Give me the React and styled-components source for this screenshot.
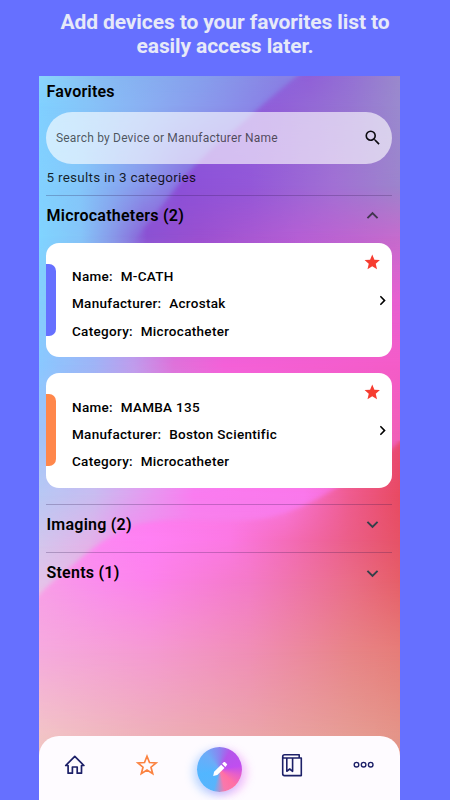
import React from "react";
import styled, { createGlobalStyle } from "styled-components";

const GlobalStyle = createGlobalStyle`
  *, *::before, *::after { box-sizing: border-box; }
  body { margin: 0; background: #6670ff; }
  h1, h2, p, ul, dl, dd { margin: 0; padding: 0; }
`;

const Page = styled.div`
  width: 450px;
  height: 800px;
  overflow: hidden;
  background: #6670ff;
  font-family: Roboto, "Liberation Sans", sans-serif;
  color: #000;
`;

const Headline = styled.h1`
  height: 76px;
  padding: 10px 0 0;
  text-align: center;
  font-size: 21px;
  line-height: 24.4px;
  font-weight: 700;
  letter-spacing: -0.1px;
  color: #e6e9f8;
`;

const Phone = styled.main`
  position: relative;
  isolation: isolate;
  display: flex;
  flex-direction: column;
  width: 361.5px;
  height: 724px;
  margin-left: 38.5px;
  overflow: hidden;
`;

const WallpaperSvg = styled.svg`
  position: absolute;
  inset: 0;
  z-index: -1;
  width: 100%;
  height: 100%;
`;

const Content = styled.div`
  flex: 1;
  padding: 0 8px 0 7.5px;
`;

const ScreenTitle = styled.h2`
  height: 36px;
  padding: 6px 0 0 0.5px;
  font-size: 16px;
  line-height: 20px;
  font-weight: 600;
  letter-spacing: 0.25px;
`;

const SearchBar = styled.div`
  display: flex;
  align-items: center;
  justify-content: space-between;
  height: 51.5px;
  padding: 0 10px;
  border-radius: 26px;
  background: rgba(255, 255, 255, 0.62);
`;

const Placeholder = styled.span`
  font-size: 12px;
  letter-spacing: 0.19px;
  color: rgba(0, 0, 0, 0.65);
`;

const ResultCount = styled.p`
  height: 31.5px;
  padding: 4px 0 0 0.5px;
  font-size: 13.5px;
  line-height: 19px;
  letter-spacing: 0.26px;
  color: rgba(0, 0, 0, 0.85);
`;

const Section = styled.section`
  border-top: 1px solid rgba(40, 20, 70, 0.25);
`;

const SectionHeader = styled.div`
  display: flex;
  align-items: center;
  justify-content: space-between;
  height: ${(p) => (p.$open ? "47px" : "47.3px")};
  padding: 0 8px ${(p) => (p.$open ? "8px" : "7px")} 0.5px;
`;

const SectionTitle = styled.h2`
  font-size: 16px;
  line-height: 20px;
  font-weight: 600;
  letter-spacing: 0.24px;
`;

const CardList = styled.div`
  display: flex;
  flex-direction: column;
  gap: 16px;
  padding-bottom: 16px;
`;

const Card = styled.article`
  display: flex;
  height: 114.3px;
  border-radius: 13px;
  background: #fff;
  overflow: hidden;
`;

const ColorTab = styled.div`
  align-self: center;
  width: 10px;
  height: 72px;
  border-radius: 0 7px 7px 0;
  background: ${(p) => p.$color};
`;

const Details = styled.dl`
  flex: 1;
  padding: 19.7px 0 0 16px;
`;

const Detail = styled.div`
  display: flex;
  gap: 7.7px;
  height: 27.2px;
  align-items: center;
  font-size: 13.5px;
  font-weight: 500;
  letter-spacing: 0.31px;

  dd { white-space: nowrap; }
`;

const CardActions = styled.div`
  display: flex;
  flex-direction: column;
  align-items: flex-end;
  width: 30px;
  padding: 10px 0 0;
`;

const StarSlot = styled.div`
  height: 37.5px;
  padding-right: 10.5px;
`;

const NavBar = styled.nav`
  display: grid;
  grid-template-columns: repeat(5, 1fr);
  height: 64px;
  border-radius: 20px 20px 0 0;
  background: #fefbff;
`;

const NavItem = styled.div`
  display: flex;
  justify-content: center;
  padding-top: ${(p) => p.$top || 17}px;
`;

const EditButton = styled.div`
  display: flex;
  align-items: center;
  justify-content: center;
  width: 45px;
  height: 45px;
  padding-bottom: 2px;
  padding-left: 1px;
  border-radius: 50%;
  background: conic-gradient(
    from 0deg,
    #8a84f0 0deg,
    #b455ea 30deg,
    #c04ef0 80deg,
    #e860c8 108deg,
    #ff70a4 135deg,
    #f878ac 165deg,
    #58b4fc 197deg,
    #52b6ff 255deg,
    #6cacf8 320deg,
    #8a84f0 360deg
  );
  box-shadow: -4px 3px 9px rgba(90, 170, 255, 0.38), 5px 3px 9px rgba(235, 100, 240, 0.36);
`;

const Icon = styled.svg`
  display: block;
  flex: none;
`;

const WIDTH = 361.5;

/* Each row: [y, [x, colour] ...]; neighbouring rows blend into one another. */
const SKY = [
  [0, [0, "#8ad6fb"], [60, "#87bcf4"], [160, "#86a0ed"], [240, "#8983e4"], [361, "#8983e4"]],
  [30, [0, "#80d0ff"], [50, "#86c3f8"], [110, "#8aaef2"], [190, "#8a90ea"], [240, "#8a7ce4"], [361, "#8a70e0"]],
  [110, [0, "#82d1ff"], [40, "#84c7fa"], [70, "#86b0f3"], [110, "#8a92ea"], [145, "#8a70e0"], [180, "#8a60dc"]],
  [160, [0, "#80d4ff"], [42, "#85c4f8"], [75, "#8897e8"], [105, "#8a64d8"], [160, "#9a50d0"], [260, "#b45fd4"], [361, "#c46ccc"]],
  [225, [0, "#84cffd"], [70, "#98a8f0"], [140, "#c060d8"], [361, "#e860d0"]],
  [289, [0, "#8ac8ff"], [55, "#9fb4f6"], [95, "#c09cec"], [135, "#df72da"], [185, "#f460d8"], [361, "#f45cc8"]],
  [354, [0, "#9fc4fa"], [100, "#c4a8f0"], [200, "#f878e4"], [361, "#f060b8"]],
  [419, [0, "#b8c8f4"], [55, "#c9bcf0"], [105, "#e49cf0"], [155, "#fa7cf0"], [265, "#fa78ec"], [361, "#f060a8"]],
  [470, [0, "#d3c6ec"], [50, "#e4b2e8"], [90, "#f68cf0"], [361, "#f878dc"]],
  [520, [0, "#eac2e8"], [361, "#f0a0e8"]],
];

const VIOLET = [
  [0, [240, "#8b64dc"], [270, "#9060d8"], [315, "#9472d4"], [361, "#9a89cc"]],
  [30, [190, "#8c5cdc"], [240, "#9160d8"], [310, "#9674d2"], [361, "#9a8ace"]],
  [110, [110, "#8a60dc"], [140, "#8b50d8"], [210, "#9357d8"], [295, "#a170d4"], [361, "#9c84cc"]],
  [160, [85, "#8886e4"], [108, "#8b50d2"], [160, "#9a50d0"], [260, "#b45fd4"], [361, "#c46ccc"]],
  [225, [0, "#84cffd"], [140, "#c060d8"], [361, "#e860d0"]],
];

const CORAL = [
  [365, [0, "#fb7cf0"], [290, "#f05c9c"], [361, "#e84a72"]],
  [419, [0, "#fb7cf0"], [245, "#fa78e4"], [310, "#ef5c90"], [361, "#e84a62"]],
  [464, [0, "#fa94ee"], [60, "#fc88f2"], [110, "#ff80f4"], [190, "#fc78e4"], [250, "#f46cb8"], [310, "#eb5e88"], [361, "#e65266"]],
  [504, [0, "#f89ee8"], [60, "#fb8cee"], [110, "#fd82ec"], [210, "#f47ac8"], [310, "#ea6c88"], [361, "#e65e68"]],
  [574, [0, "#f6aade"], [110, "#f59ad2"], [210, "#f08eb6"], [310, "#e88488"], [361, "#e67c78"]],
  [660, [0, "#f2c4c6"], [110, "#eeb0b9"], [210, "#eba5aa"], [310, "#e69c94"], [361, "#e49488"]],
  [724, [0, "#f0c8c0"], [361, "#e09888"]],
];

function BlendedRows({ id, rows }) {
  return rows.map(([y, ...stops], i) => {
    const from = i === 0 ? y - 1 : rows[i - 1][0];
    return (
      <g key={y}>
        <defs>
          <linearGradient id={`${id}-c${i}`} gradientUnits="userSpaceOnUse" x1="0" x2={WIDTH} y1="0" y2="0">
            {stops.map(([x, color]) => (
              <stop key={x} offset={x / WIDTH} stopColor={color} />
            ))}
          </linearGradient>
          <linearGradient id={`${id}-f${i}`} gradientUnits="userSpaceOnUse" x1="0" x2="0" y1={from} y2={y}>
            <stop offset="0" stopColor="#fff" stopOpacity="0" />
            <stop offset="1" stopColor="#fff" />
          </linearGradient>
          <mask id={`${id}-m${i}`} maskUnits="userSpaceOnUse" x="0" y="-2" width={WIDTH} height="730">
            <rect y={from} width={WIDTH} height={730 - from} fill={`url(#${id}-f${i})`} />
          </mask>
        </defs>
        <rect y={from} width={WIDTH} height={730 - from} fill={`url(#${id}-c${i})`} mask={`url(#${id}-m${i})`} />
      </g>
    );
  });
}

function Wallpaper() {
  return (
    <WallpaperSvg viewBox="0 0 361.5 724" preserveAspectRatio="none" aria-hidden="true">
      <defs>
        <filter id="soft" x="-10%" y="-10%" width="120%" height="120%">
          <feGaussianBlur stdDeviation="2" />
        </filter>
        <linearGradient id="violet-fade" x1="0" y1="0" x2="0" y2="1">
          <stop offset="0.6" stopColor="#fff" />
          <stop offset="1" stopColor="#fff" stopOpacity="0" />
        </linearGradient>
        <mask id="violet-shape" maskUnits="userSpaceOnUse" x="0" y="0" width="362" height="724">
          <path
            d="M266 -6 L258 0 C244 11 231 22 218 34 C204 47 190 58 176 70 C166 79 158 87 150 96 C138 110 126 126 115 140 C108 149 100 158 92 168 L60 260 H380 V-6 Z"
            fill="url(#violet-fade)"
            filter="url(#soft)"
          />
        </mask>
        <mask id="coral-shape" maskUnits="userSpaceOnUse" x="0" y="0" width="362" height="724">
          <path
            d="M-10 528 L0 519 C10 508 20 500 30 492 C41 483 52 473 63 466 C75 459 86 452 100 448 C145 438 190 450 232 441 C266 432 285 419 309 405 C330 393 346 380 375 352 V740 H-10 Z"
            fill="#fff"
            filter="url(#soft)"
          />
        </mask>
      </defs>
      <BlendedRows id="sky" rows={SKY} />
      <g mask="url(#violet-shape)">
        <BlendedRows id="violet" rows={VIOLET} />
      </g>
      <g mask="url(#coral-shape)">
        <BlendedRows id="coral" rows={CORAL} />
      </g>
    </WallpaperSvg>
  );
}

const SearchIcon = () => (
  <Icon width="19.5" height="19.5" viewBox="0 0 24 24" fill="#0c0a10">
    <path d="M15.5 14h-.79l-.28-.27A6.47 6.47 0 0 0 16 9.5 6.5 6.5 0 1 0 9.5 16c1.61 0 3.09-.59 4.23-1.57l.27.28v.79l5 4.99L20.49 19l-4.99-5zm-6 0C7.01 14 5 11.99 5 9.5S7.01 5 9.5 5 14 7.01 14 9.5 11.99 14 9.5 14z" />
  </Icon>
);

const ExpandIcon = ({ open }) => (
  <Icon width="23" height="23" viewBox="0 0 24 24" fill={open ? "#41364f" : "#33404a"}>
    <path
      d={
        open
          ? "M12 8l-6 6 1.41 1.41L12 10.83l4.59 4.58L18 14z"
          : "M16.59 8.59L12 13.17 7.41 8.59 6 10l6 6 6-6z"
      }
    />
  </Icon>
);

const FavoriteIcon = () => (
  <Icon width="18.5" height="18.5" viewBox="0 0 24 24" fill="#f63c30">
    <path d="M12 17.27L18.18 21l-1.64-7.03L22 9.24l-7.19-.61L12 2 9.19 8.63 2 9.24l5.46 4.73L5.82 21z" />
  </Icon>
);

const OpenIcon = () => (
  <Icon width="19" height="19" viewBox="0 0 24 24" fill="#000">
    <path d="M10 6L8.59 7.41 13.17 12l-4.58 4.59L10 18l6-6z" />
  </Icon>
);

const HomeIcon = () => (
  <Icon width="24" height="24" viewBox="0 0 24 24" fill="none" stroke="#1d2068" strokeWidth="1.7" strokeLinejoin="round" strokeLinecap="round">
    <path d="M2.7 12.5 11.8 3.4l9.1 9.1h-2.4v7.7h-4.3v-6.2H9.4v6.2H5.1v-7.7z" />
  </Icon>
);

const StarIcon = () => (
  <Icon width="24" height="24" viewBox="0 0 24 24" fill="none" stroke="#fb8240" strokeWidth="1.7" strokeLinejoin="miter">
    <path d="M12 3.3l2.5 6.2 6.6.5-5.1 4.2 1.7 6.5-5.7-3.6-5.7 3.6 1.7-6.5-5.1-4.2 6.6-.5z" />
  </Icon>
);

const PencilIcon = () => (
  <Icon width="18" height="18" viewBox="0 0 18 18" fill="#fff">
    <path d="M2.2 15.9 3.1 11.7 10.2 4.7 13.5 7.9 6.3 15z" />
    <path d="M11.1 3.8 12.9 2.1q.5-.4 1 0l2 2q.4.5 0 1L14.4 6.9z" />
  </Icon>
);

const BookIcon = () => (
  <Icon width="24" height="24" viewBox="0 0 24 24" fill="none" stroke="#1d2068" strokeWidth="1.6" strokeLinejoin="round">
    <path d="M19.2 5V1.8H4.6Q2.7 1.8 2.7 3.8v17q0 1.800 1.800 1.800H21.3V5H4.5Q2.7 5 2.7 3.7" />
    <path d="M6.8 5v13.3l2.9-2.3 2.9 2.3V5" />
  </Icon>
);

const MoreIcon = () => (
  <Icon width="24" height="24" viewBox="0 0 24 24" fill="none" stroke="#1d2068" strokeWidth="1.4">
    <circle cx="4.5" cy="11.7" r="2.3" />
    <circle cx="11.6" cy="11.7" r="2.3" />
    <circle cx="18.7" cy="11.7" r="2.3" />
  </Icon>
);

const DEVICES = [
  { color: "#6670ff", name: "M-CATH", manufacturer: "Acrostak", category: "Microcatheter" },
  { color: "#ff874b", name: "MAMBA 135", manufacturer: "Boston Scientific", category: "Microcatheter" },
];

function DeviceCard({ device }) {
  return (
    <Card>
      <ColorTab $color={device.color} />
      <Details>
        <Detail><dt>Name:</dt><dd>{device.name}</dd></Detail>
        <Detail><dt>Manufacturer:</dt><dd>{device.manufacturer}</dd></Detail>
        <Detail><dt>Category:</dt><dd>{device.category}</dd></Detail>
      </Details>
      <CardActions>
        <StarSlot><FavoriteIcon /></StarSlot>
        <OpenIcon />
      </CardActions>
    </Card>
  );
}

function CategorySection({ title, open, children }) {
  return (
    <Section>
      <SectionHeader $open={open}>
        <SectionTitle>{title}</SectionTitle>
        <ExpandIcon open={open} />
      </SectionHeader>
      {children}
    </Section>
  );
}

export default function App() {
  return (
    <Page>
      <GlobalStyle />
      <Headline>
        Add devices to your favorites list to
        <br />
        easily access later.
      </Headline>
      <Phone>
        <Wallpaper />
        <Content>
          <ScreenTitle>Favorites</ScreenTitle>
          <SearchBar>
            <Placeholder>Search by Device or Manufacturer Name</Placeholder>
            <SearchIcon />
          </SearchBar>
          <ResultCount>5 results in 3 categories</ResultCount>
          <CategorySection title="Microcatheters (2)" open>
            <CardList>
              {DEVICES.map((device) => (
                <DeviceCard key={device.name} device={device} />
              ))}
            </CardList>
          </CategorySection>
          <CategorySection title="Imaging (2)" />
          <CategorySection title="Stents (1)" />
        </Content>
        <NavBar>
          <NavItem><HomeIcon /></NavItem>
          <NavItem><StarIcon /></NavItem>
          <NavItem $top={11}><EditButton><PencilIcon /></EditButton></NavItem>
          <NavItem><BookIcon /></NavItem>
          <NavItem><MoreIcon /></NavItem>
        </NavBar>
      </Phone>
    </Page>
  );
}
